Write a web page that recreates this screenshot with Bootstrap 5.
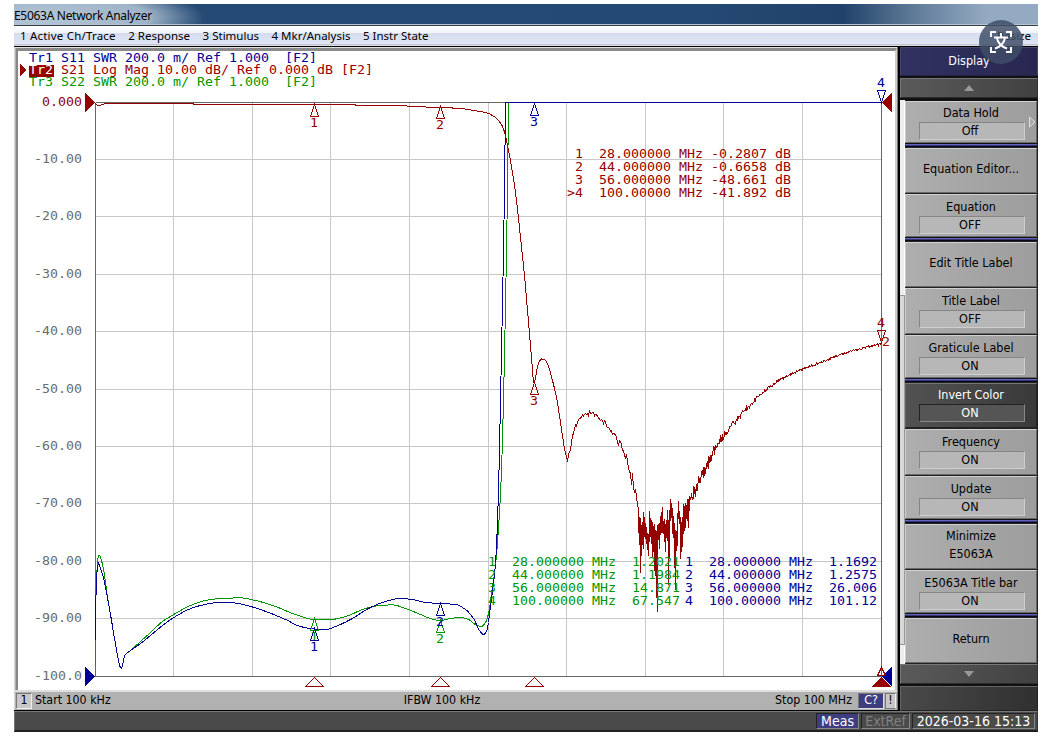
<!DOCTYPE html>
<html lang="en">
<head>
<meta charset="utf-8">
<title>E5063A Network Analyzer</title>
<link rel="stylesheet" href="https://cdn.jsdelivr.net/npm/bootstrap@5.3.0/dist/css/bootstrap.min.css">
<script src="https://cdn.jsdelivr.net/npm/bootstrap@5.3.0/dist/js/bootstrap.bundle.min.js"></script>
<style>
  body { background:#fff; font-family:"DejaVu Sans Condensed","DejaVu Sans",sans-serif; font-stretch:condensed; font-size:12.5px; line-height:1; color:#000; overflow:hidden; }
  .app-window { width:1024px; height:728px; margin:4px 0 0 14px; background:#000; }
  .title-strip { height:22px; padding-top:1px; white-space:nowrap; border-bottom:1px solid #333f4d; font:12px "Noto Sans",sans-serif; letter-spacing:-.3px;
    background:radial-gradient(ellipse 160px 34px at 30px 14px,#b5c6d6 0,#9fb4c8 65%,#9fb4c800 100%),linear-gradient(90deg,#4f7394 0,#254b75 16%,#244a73 65%,#21426a 81%,#607c99 88%,#94aac2 95%,#94aac2 100%); box-shadow:inset 0 -1px #b8c6d4; }
  .menu-strip { height:20px; gap:12.5px; padding:0 7px 2px 6px; background:linear-gradient(#fff 0,#f1f4fa 34%,#d5dcee 36%,#dfe5f4 88%,#b5b9c3 90%,#e8e8e8 100%); font:11.5px "Noto Sans",sans-serif; white-space:nowrap; }
  .menu-strip span { display:block; }
  .menu-strip span:first-child { letter-spacing:.2px; }
  .work-area { height:664px; padding-top:1px; }
  .plot-frame { width:884px; height:663px; border-left:1px solid #d8d8d8; border-right:1px solid #777; background:#b0b0b0; box-shadow:inset 0 1px #e0e0e0; }
  .plot-box { margin:1px 0 0 1px; height:642px; width:881px; border:solid #8a8a8a; border-width:3px 2px 0; border-right-color:#ccc; border-left-color:#888; background:#fff; }
  .plot-box svg { display:block; }
  .sweep-strip { height:19px; background:#b1b1b1; border-top:2px solid #dedede; font-size:12.3px; position:relative; }
  .channel-no { width:16px; height:16px; border:1px solid #777; border-right-color:#eee; border-bottom-color:#eee; background:#c8c8c8; margin:0 3px 0 1px; }
  .correction { width:26px; height:16px; background:#3d3d80; color:#fff; border:1px solid #777; border-right-color:#ddd; border-bottom-color:#ddd; }
  .alert-mark { width:11px; height:16px; background:#c8c8c8; border:1px solid #777; border-right-color:#eee; margin:0 1px 0 1px; }
  .soft-panel { width:138px; margin-left:2px; background:#111; }
  .panel-head { height:29px; margin-bottom:2px; border:1px solid #45456e; border-bottom-color:#222244; background:linear-gradient(90deg,#323262,#272750); color:#fff; }
  .scroll-key { height:20px; border:1px solid #777; border-right-color:#333; border-bottom-color:#2a2a2a; background:linear-gradient(90deg,#5a5a5a,#414141); }
  .keys { padding-left:5px; background:linear-gradient(90deg,#eee 0,#eee 4px,#fff 4px,#fff 5px,#222 5px); margin-top:2px; height:564px; }
  .rail-thumb { position:absolute; left:0; top:195px; width:5px; height:350px; background:#d8d8d8; border:1px solid #999; border-left:0; }
  .key-cell { height:47px; padding-top:1px; background:#222; width:132px; white-space:nowrap; }
  .soft-key { height:45px; border:1px solid #d0d0d0; border-left-color:#ccc; border-right-color:#666; border-bottom-color:#686868; background:linear-gradient(90deg,#aeaeae,#9d9d9d); position:relative; }
  .group-end { background:linear-gradient(#111 44px,#6464bc 44px,#6464bc 45px,#38387c 45px,#2c2c62 47px); box-shadow:inset 0 -1px #080818; }
  .group-end .soft-key { height:42px; }
  .key-cell:not(.group-end) + .key-cell { padding-top:0; }
  .key-cell:not(.group-end) + .key-cell .soft-key { height:43px; }
  .key-cell:not(.group-end) + .key-cell:not(.group-end) .soft-key { height:46px; }
  .key-cell:not(.group-end) + .key-cell .key-label { height:21px; padding-top:6px; }
  .key-label { height:20px; padding-top:5px; text-align:center; }
  .key-value { width:106px; height:18px; margin:0 0 0 13px; border:1px solid #858585; border-right-color:#cecece; border-bottom-color:#cecece; background:#b7b7b7; text-align:center; padding:2px 4px 0 0; }
  .key-solo { padding:14px 0 0; text-align:center; }
  .key-active { background:linear-gradient(90deg,#525252,#393939); color:#fff; border-color:#777 #222 #222 #666; }
  .key-active .key-value { background:#555; border-color:#222 #888 #888 #222; }
  .submenu-tip { position:absolute; right:0; top:14px; }
  .blank-key { height:25px; margin-top:2px; border:1px solid #666; border-right-color:#222; border-bottom-color:#222; background:linear-gradient(90deg,#494949,#303030); }
  .status-strip { height:21px; margin-top:1px; border:1px solid #777; border-bottom:2px solid #202020; border-right-color:#333; background:#4a4a4a; color:#fff; font-size:14px; padding:1px 2px 0; gap:2px; }
  .status-cell { height:16px; border:1px solid #222; border-right-color:#888; border-bottom-color:#888; white-space:nowrap; text-align:center; }
  .translate-bubble { position:absolute; left:965px; top:16px; width:44px; height:44px; }
  .mono { font:12.4px "DejaVu Sans Mono",monospace; white-space:pre; }
</style>
</head>
<body>
<main class="app-window position-relative">
  <header class="title-strip d-flex align-items-center">E5063A Network Analyzer</header>
  <nav class="menu-strip d-flex align-items-center">
    <span>1 Active Ch/Trace</span><span>2 Response</span><span>3 Stimulus</span><span>4 Mkr/Analysis</span><span>5 Instr State</span><span class="ms-auto">Resize</span>
  </nav>
  <div class="work-area d-flex">
    <section class="plot-frame">
      <div class="plot-box">
        <svg id="plot" width="877" height="639" viewBox="18 51 877 639" fill="none" shape-rendering="crispEdges"></svg>
      </div>
      <div class="sweep-strip d-flex align-items-center">
        <span class="channel-no d-flex align-items-center justify-content-center">1</span><span>Start 100 kHz</span>
        <span class="position-absolute start-50 translate-middle-x" style="margin-left:-14px">IFBW 100 kHz</span>
        <span class="ms-auto" style="margin-right:6px">Stop 100 MHz</span>
        <span class="correction d-flex align-items-center justify-content-center">C?</span>
        <span class="alert-mark d-flex align-items-center justify-content-center">!</span>
      </div>
    </section>
    <aside class="soft-panel">
      <div class="panel-head d-flex align-items-center justify-content-center">Display</div>
      <div class="scroll-key d-flex align-items-center justify-content-center"><svg width="10" height="6"><path d="M0 6L5 0L10 6Z" fill="#999"/></svg></div>
      <div class="keys position-relative" id="keys"><div class="rail-thumb"></div></div>
      <div class="scroll-key d-flex align-items-center justify-content-center"><svg width="10" height="6"><path d="M0 0L5 6L10 0Z" fill="#999"/></svg></div>
      <div class="blank-key"></div>
    </aside>
  </div>
  <footer class="status-strip d-flex justify-content-end">
    <span class="status-cell" style="width:43px;background:#3d3d80">Meas</span>
    <span class="status-cell" style="width:49px;color:#818181">ExtRef</span>
    <span class="status-cell" style="width:123px">2026-03-16 15:13</span>
  </footer>
  <svg class="translate-bubble" viewBox="0 0 44 44" fill="none" stroke="#fff" stroke-width="2">
    <circle cx="22" cy="22" r="22" fill="#3f4e68" fill-opacity=".84" stroke="none"/>
    <path d="M12 17V12H17M27 12H32V17M32 27V32H27M17 32H12V27"/>
    <path d="M22 13V17M15 17.5H29M18 18C19 23 23 27 28 28.500M26 18C25 23 21 27 16 28.500"/>
  </svg>
</main>
<script>
const RED='#960000', BLUE='#000096', GREEN='#009600';
let out='';
const line=(x1,y1,x2,y2,c)=>out+=`<path d="M${x1+.5} ${y1+.5}L${x2+.5} ${y2+.5}" stroke="${c}"/>`;
const label=(x,y,s,c)=>out+=`<text class="mono" xml:space="preserve" x="${x}" y="${y}" fill="${c}" textLength="${s.length*8}" lengthAdjust="spacingAndGlyphs">${s}</text>`;
const poly=(pts,c)=>out+=`<polyline points="${pts.map(p=>(p[0]+.5)+','+(p[1]+.5)).join(' ')}" stroke="${c}"/>`;
const solid=(d,c)=>out+=`<path d="${d}" fill="${c}"/>`;
// graticule
const cols=[173,252,330,409,488,566,645,723,802], rows=[159,216,274,331,389,446,503,561,618];
cols.forEach(x=>line(x,102,x,676,'#c8c8c8'));
rows.forEach(y=>line(95,y,881,y,'#c8c8c8'));
line(95,102,881,102,'#666');line(95,676,881,676,'#666');line(95,102,95,676,'#666');line(881,102,881,676,'#666');
label(42,106,'0.000',RED);
rows.concat(676).forEach((y,i)=>label(34,y+4,i==9?'-100.0':'-'+(i+1)*10+'.00','#6c6c6c'));
// smooth curve sampling (monotone cubic through the knots)
function sample(k,step){
  const n=k.length,d=[],m=[],r=[];
  for(let i=0;i<n-1;i++)d[i]=(k[i+1][1]-k[i][1])/(k[i+1][0]-k[i][0]);
  for(let i=0;i<n;i++)m[i]=i==0?d[0]:i==n-1?d[n-2]:d[i-1]*d[i]<=0?0:2*d[i-1]*d[i]/(d[i-1]+d[i]);
  for(let i=0;i<n-1;i++){const h=k[i+1][0]-k[i][0];
    for(let x=0;x<h;x+=step){const t=x/h,a=t*t,b=a*t;
      r.push([k[i][0]+x,(2*b-3*a+1)*k[i][1]+(b-2*a+t)*h*m[i]+(3*a-2*b)*k[i+1][1]+(b-a)*h*m[i+1]]);}}
  r.push(k[n-1]);return r;
}
const s22=[[95,665],[95.4,590],[96.5,570],[98,555],[99,555],[101,560],[104,574],[106,590],[110,614],[114,638],[117,655],[119,665],[121,668],[122,665],[124,655],[130,650],[140,641],[150,632],[162,621],[175,613],[190,605],[205,600],[220,598],[240,597.4],[255,600],[275,606],[295,614],[314,619],[330,619],[345,616],[365,608],[380,605],[392,604.4],[405,608],[420,614],[430,618],[440,620],[450,618],[460,617],[468,619],[475,624],[481,626],[486,620],[489,608],[491,593],[495,565],[498.5,520],[501,470],[503,400],[504.5,330],[506,250],[507,190],[508,102]];
const s11=[[95,640],[95.5,595],[96.5,572],[98,563],[100,568],[103,577],[106,592],[110,614],[114,638],[117,655],[119,665],[121,668],[122,665],[124,655],[130,650],[140,643],[150,635],[162,625],[175,616],[188,609],[200,605],[215,602.4],[232,602.4],[250,606],[268,612],[285,619],[300,626],[314,628.5],[325,629],[335,626],[350,619],[370,607],[385,601],[400,598],[412,599],[425,602],[440,603],[455,604],[465,609],[473,618],[479,630],[483,634],[486,631],[488,622],[490,605],[492.5,587],[495,563],[496.7,530],[498.5,470],[500,400],[501.5,327],[503,250],[504,190],[505,102]];
poly(sample(s22,1),GREEN);
poly([...sample(s11,1),[881,102]],BLUE);
const s21=[[95,103],[97,104.6],[100,104.6],[103,103.6],[111,103],[192,103],[194,104],[354,104],[356,105],[400,105],[412,106],[440,107],[460,108],[473,110],[485,112],[492,115],[498,120],[502,126],[505,135],[508,150],[512,172],[516,200],[520,237],[524,275],[527,310],[530,345],[532,370],[533,382],[534,382],[536,371],[538,363],[541,358.5],[545,360],[549,369],[552,380],[556,397],[560,422],[563,442],[565,453],[566,456],[567,463],[568,455],[570,448],[572,437],[576,424],[580,418],[586,413],[590,413],[598,417],[605,423],[612,433],[620,446],[627,464],[632,481],[637,505]];
const tail=[[689,503],[693,493],[700,477],[710,457],[722,436],[735,421],[750,404],[765,390],[780,379],[802,369],[830,358],[850,351],[881,343]];
// min/max of each measured column in the noise floor
const floor=[[508,520],[517,544],[518,572],[528,541],[522,540],[512,548],[521,535],[523,538],[530,537],[533,549],[535,555],[511,529],[523,530],[520,543],[523,556],[527,548],[524,565],[530,575],[532,584],[526,611],[524,530],[529,548],[516,534],[516,530],[507,531],[522,533],[519,532],[528,551],[520,534],[510,540],[529,584],[520,534],[499,520],[503,515],[511,530],[516,537],[528,545],[530,589],[531,550],[524,542],[501,514],[511,523],[522,558],[526,545],[517,546],[504,521],[507,530],[503,525],[506,517],[499,520],[499,527]];
let seed=41;const rnd=()=>{seed=(seed*16807)%2147483647;return seed/2147483647*2-1};
const amp=x=>x<565?0:x<610?2.2:x<637?3+(x-610)*.3:x<725?10-(x-689)*.16:x<780?3.6-(x-725)*.045:1;
const rough=a=>a.map(([x,y])=>[x,y+rnd()*amp(x)]);
let band=[];floor.forEach(([a,b],i)=>{band.push([638+i,i%2?b:a],[638+i,i%2?a:b])});
poly([...rough(sample(s21,1)),...band,...rough(sample(tail,.7))],RED);
// markers
const up=(x,y,n,c)=>{out+=`<path d="M${x+.5} ${y+.5}L${x-3.5} ${y+12.5}H${x+4.5}Z" stroke="${c}"/>`;label(x-4,y+23,n,c)};
const down=(x,y,n,c)=>{out+=`<path d="M${x+.5} ${y+.5}L${x-3.5} ${y-11.5}H${x+4.5}Z" stroke="${c}"/>`;label(x-4,y-15,n,c)};
up(314,104,'1',RED);up(440,106,'2',RED);up(534,382,'3',RED);up(534,103,'3',BLUE);
up(314,618,'1',GREEN);up(314,628,'1',BLUE);up(440,620,'2',GREEN);up(440,603,'2',BLUE);
down(881,102,'4',BLUE);down(881,342,'4',RED);label(882,346,'2',RED);
[314,440,534].forEach(x=>out+=`<path d="M${x+.5} 677.5L${x-8.5} 686.5H${x+9.5}Z" stroke="${RED}"/>`);
solid('M85 93V112L95.500 102.500Z',RED);solid('M892 93V112L882 102.500Z',RED);
solid('M85 667V686L95.500 676.500Z',BLUE);solid('M892 667V686L882 676.500Z',BLUE);
solid('M881.500 677L871.500 687H891.500Z',RED);
out+=`<path d="M881.500 667.500L877.500 675.500H885.500Z" stroke="${RED}"/>`;
// trace captions
solid('M20 64V76L26.500 70Z',RED);out+=`<rect x="29" y="65" width="25" height="12" fill="${RED}"/>`;
label(29,62,'Tr1 S11 SWR 200.0 m/ Ref 1.000  [F2]',BLUE);
label(29,74,'Tr2','#fff');label(61,74,'S21 Log Mag 10.00 dB/ Ref 0.000 dB [F2]',RED);
label(29,86,'Tr3 S22 SWR 200.0 m/ Ref 1.000  [F2]',GREEN);
// marker readouts
['1  28.000000 MHz -0.2807 dB','2  44.000000 MHz -0.6658 dB','3  56.000000 MHz -48.661 dB','4  100.00000 MHz -41.892 dB'].forEach((s,i)=>label(575,158+13*i,s,RED));
label(567,197,'>',RED);
const read=(x,v,c)=>v.forEach((s,i)=>label(x,566+13*i,`${i+1}  ${['28.000000','44.000000','56.000000','100.00000'][i]} MHz  ${s}`,c));
read(488,['1.2021','1.1984','14.871','67.547'],GREEN);
read(685,['1.1692','1.2575','26.006','101.12'],BLUE);
document.getElementById('plot').innerHTML=out;
// softkeys: label, value, end of group
const keys=[['Data Hold','Off',1],['Equation Editor...',''],['Equation','OFF',1],['Edit Title Label',''],['Title Label','OFF'],['Graticule Label','ON',1],['Invert Color','ON'],['Frequency','ON'],['Update','ON',1],['Minimize<br>E5063A',''],['E5063A Title bar','ON',1],['Return','']];
document.getElementById('keys').insertAdjacentHTML('beforeend',keys.map(([a,v,g],i)=>`<div class="key-cell ${g?'group-end':''}"><div class="soft-key ${i==6?'key-active':''}">${v?`<div class="key-label">${a}</div><div class="key-value">${v}</div>`:a.includes('<br>')?`<div class="key-label" style="line-height:18px;padding-top:2px">${a}</div>`:`<div class="key-solo">${a}</div>`}${i?'':'<svg class="submenu-tip" width="8" height="12"><path d="M1.500 1V11L7 6Z" fill="#aaa" stroke="#ddd"/></svg>'}</div></div>`).join(''));
</script>
</body>
</html>
